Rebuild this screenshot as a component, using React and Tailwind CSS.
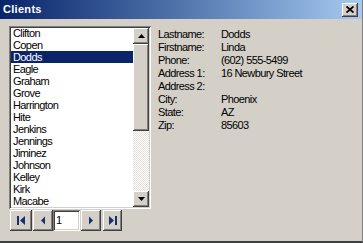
import React from "react";

const raised =
  "bg-[#d4d0c8] shadow-[inset_-1px_-1px_0_#404040,inset_1px_1px_0_#ffffff,inset_-2px_-2px_0_#808080,inset_2px_2px_0_#d4d0c8]";
const sunken =
  "shadow-[inset_1px_1px_0_#808080,inset_-1px_-1px_0_#ffffff,inset_2px_2px_0_#404040,inset_-2px_-2px_0_#d4d0c8]";

const names = [
  "Clifton",
  "Copen",
  "Dodds",
  "Eagle",
  "Graham",
  "Grove",
  "Harrington",
  "Hite",
  "Jenkins",
  "Jennings",
  "Jiminez",
  "Johnson",
  "Kelley",
  "Kirk",
  "Macabe",
];

const fields = [
  ["Lastname:", "Dodds"],
  ["Firstname:", "Linda"],
  ["Phone:", "(602) 555-5499"],
  ["Address 1:", "16 Newbury Street"],
  ["Address 2:", ""],
  ["City:", "Phoenix"],
  ["State:", "AZ"],
  ["Zip:", "85603"],
];

function Tri({ dir }) {
  return (
    <svg width="7" height="4" viewBox="0 0 7 4">
      {dir === "up" ? (
        <polygon points="3.5,0 7,4 0,4" fill="#000" />
      ) : (
        <polygon points="0,0 7,0 3.5,4" fill="#000" />
      )}
    </svg>
  );
}

function NavIcon({ kind }) {
  const c = "#17306b";
  return (
    <svg width="8" height="9" viewBox="0 0 8 9">
      {kind === "first" && (
        <>
          <rect x="0" y="0" width="2" height="9" fill={c} />
          <polygon points="8,0 8,9 3,4.5" fill={c} />
        </>
      )}
      {kind === "prev" && <polygon points="6,0.5 6,8.5 2,4.5" fill={c} />}
      {kind === "next" && <polygon points="2,0.5 2,8.5 6,4.5" fill={c} />}
      {kind === "last" && (
        <>
          <polygon points="0,0 0,9 5,4.5" fill={c} />
          <rect x="6" y="0" width="2" height="9" fill={c} />
        </>
      )}
    </svg>
  );
}

export default function App() {
  return (
    <div
      className="w-[363px] h-[243px] bg-[#d4d0c8] flex flex-col border-r border-r-[#808080] border-b-[2px] border-b-[#404040] text-[11px] text-black overflow-hidden"
      style={{ fontFamily: '"Liberation Sans", Arial, sans-serif' }}
    >
      {/* Title bar */}
      <div className="h-[19px] shrink-0 bg-linear-to-r from-[#0a246a] to-[#a6caf0] flex items-center justify-between pl-[3px] pr-[4px]">
        <span className="text-white font-bold text-[11px] leading-[19px] tracking-[0.3px]">
          Clients
        </span>
        <div className={`${raised} w-[16px] h-[14px] flex items-center justify-center`}>
          <svg width="8" height="7" viewBox="0 0 8 7">
            <path d="M0.5 0.5 L7.5 6.5 M7.5 0.5 L0.5 6.5" stroke="#000" strokeWidth="1.8" />
          </svg>
        </div>
      </div>

      {/* Body */}
      <div className="flex-1 flex pl-[9px] pt-[7px]">
        {/* Left column */}
        <div className="w-[142px] flex flex-col">
          <div className={`${sunken} bg-white h-[183px] px-[2px] pt-[1px] pb-[2px] flex`}>
            <div className="flex-1 overflow-hidden">
              {names.map((n) => (
                <div
                  key={n}
                  className={`h-[12px] leading-[12px] px-[2px] tracking-[-0.6px] ${
                    n === "Dodds" ? "bg-[#0a246a] text-white" : ""
                  }`}
                >
                  {n}
                </div>
              ))}
            </div>
            <div className="w-[16px] flex flex-col mt-[1px]">
              <div className={`${raised} h-[16px] flex items-center justify-center`}>
                <Tri dir="up" />
              </div>
              <div className={`${raised} h-[87px]`} />
              <div className="flex-1 bg-[repeating-conic-gradient(#ffffff_0%_25%,#e4e1da_0%_50%)] bg-[length:2px_2px]" />
              <div className={`${raised} h-[16px] flex items-center justify-center`}>
                <Tri dir="down" />
              </div>
            </div>
          </div>

          {/* Navigator */}
          <div className="mt-[1px] h-[21px] flex items-stretch pl-[1px]">
            <div className={`${raised} w-[22px] flex items-center justify-center`}>
              <NavIcon kind="first" />
            </div>
            <div className={`${raised} w-[20px] ml-[1px] flex items-center justify-center`}>
              <NavIcon kind="prev" />
            </div>
            <div className={`${sunken} bg-white w-[27px] flex items-center pl-[3px]`}>
              1
            </div>
            <div className={`${raised} w-[20px] ml-[1px] flex items-center justify-center`}>
              <NavIcon kind="next" />
            </div>
            <div className={`${raised} w-[19px] ml-[2px] flex items-center justify-center`}>
              <NavIcon kind="last" />
            </div>
          </div>
        </div>

        {/* Right column */}
        <div className="ml-[7px] pt-[2px] flex flex-col tracking-[-0.6px]">
          {fields.map(([l, v]) => (
            <div key={l} className="flex h-[13px] leading-[13px]">
              <span className="w-[63px]">{l}</span>
              <span>{v}</span>
            </div>
          ))}
        </div>
      </div>
    </div>
  );
}
